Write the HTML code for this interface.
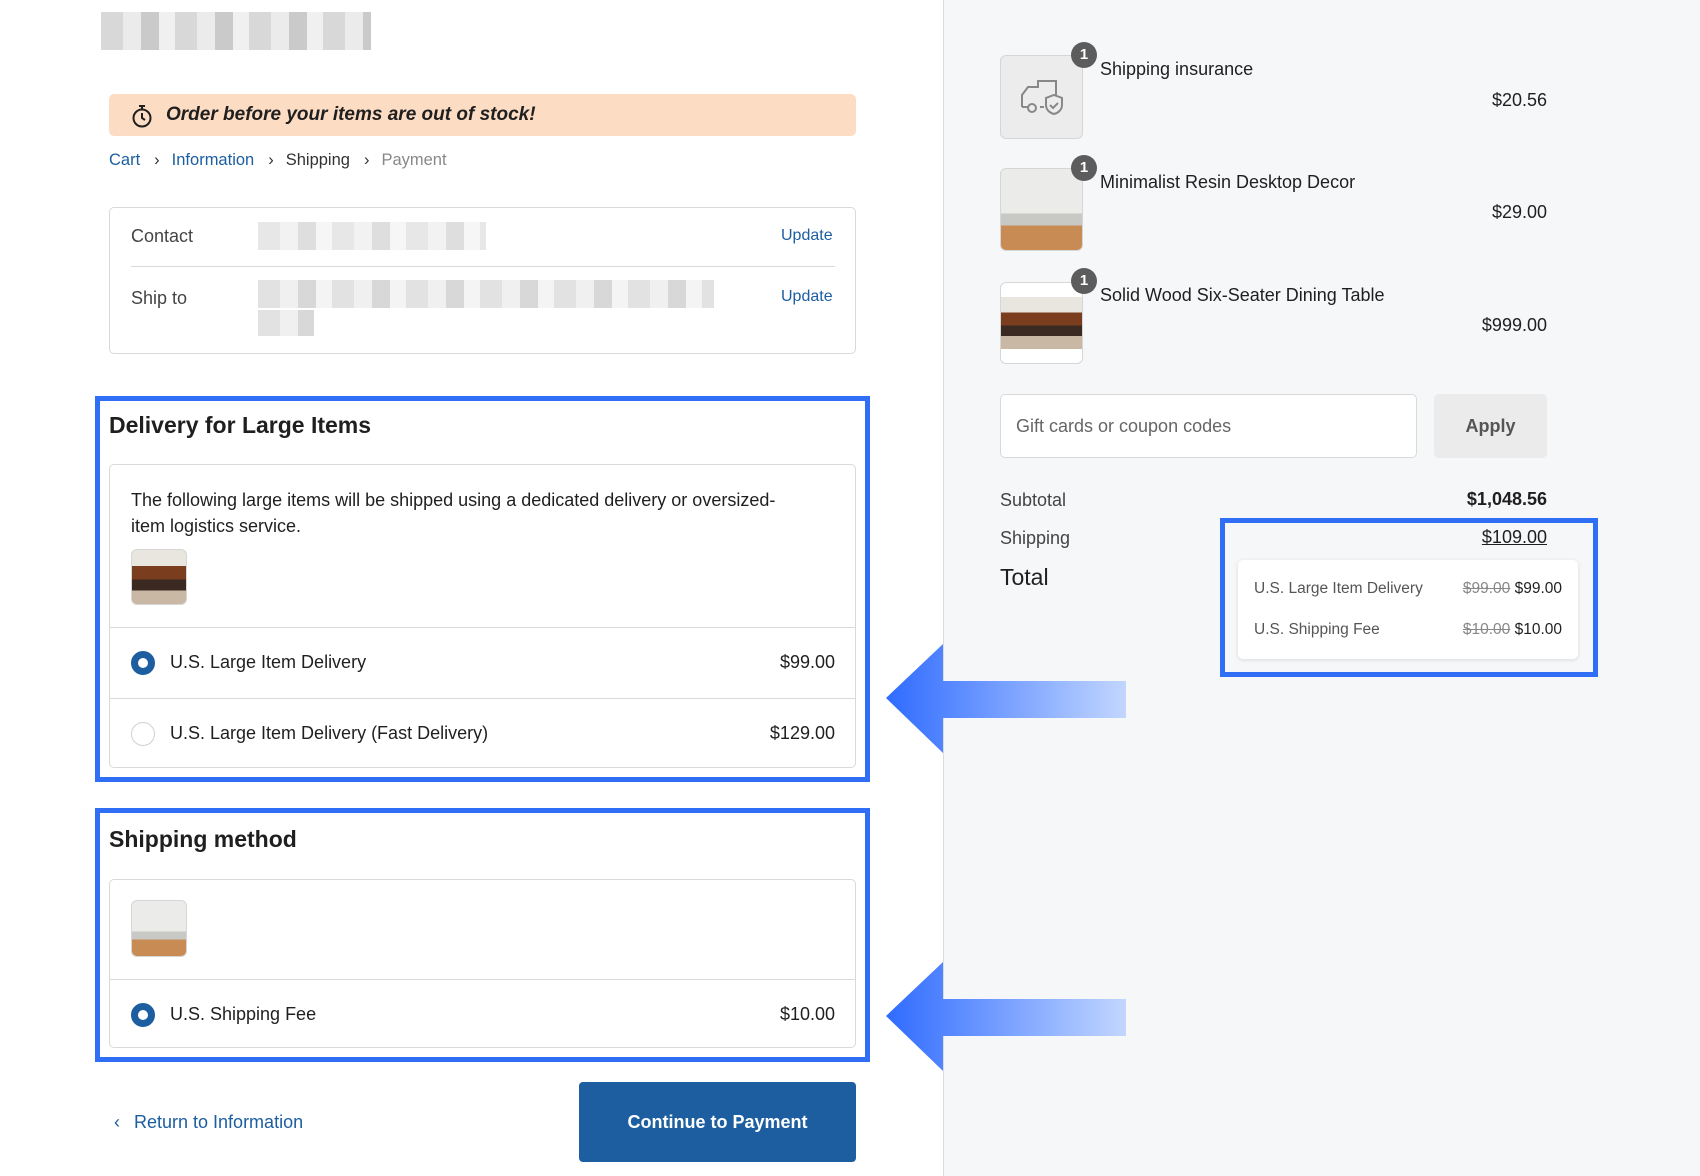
<!DOCTYPE html>
<html><head><meta charset="utf-8"><style>
*{box-sizing:border-box;margin:0;padding:0}
body{width:1700px;height:1176px;position:relative;overflow:hidden;background:#fff;font-family:"Liberation Sans",Arial,sans-serif;color:#1f1f1f}
.a{position:absolute}
.right{left:943px;top:0;width:757px;height:1176px;background:#f6f7f9;border-left:1px solid #dcdcdc}
.box{border:1px solid #d9d9d9;border-radius:5px;background:#fff}
.blue{border:5px solid #2f6ef5}
.t18{font-size:18px}
.blur{background:repeating-linear-gradient(90deg,#cfcfcf 0 22px,#e6e6e6 22px 40px,#bdbdbd 40px 58px,#ececec 58px 74px)}
.radio{width:24px;height:24px;border-radius:50%}
.on{background:#fff;border:7px solid #1c5ea0}
.off{border:1px solid #d0d0d0;background:#fff}
.thumb{border:1px solid #d6d6d6;border-radius:6px;overflow:hidden;background:#ececec}
.badge{width:26px;height:26px;border-radius:50%;background:#5c5c5c;color:#fff;font-size:15px;font-weight:bold;text-align:center;line-height:26px}
.table{background:linear-gradient(#e9e6e0 0 30%,#7a3d1e 30% 55%,#3b2a22 55% 75%,#c9b8a3 75%)}
.deer{background:linear-gradient(#ebebea 0 55%,#c8c8c4 55% 70%,#c98b54 70%)}
</style></head><body>
<div class="a blur" style="left:101px;top:12px;width:270px;height:38px;opacity:.8"></div>
<div class="a" style="left:109px;top:94px;width:747px;height:42px;background:#fddcc4;border-radius:5px"></div>
<svg class="a" style="left:131px;top:104px" width="22" height="24" viewBox="0 0 22 24"><circle cx="11" cy="14" r="8.5" fill="none" stroke="#1f1f1f" stroke-width="2"/><path d="M8 2h6M11 2v3M11 9v5l3 2" fill="none" stroke="#1f1f1f" stroke-width="2"/></svg>
<div class="a" style="left:166px;top:104px;font-size:19px;font-weight:bold;font-style:italic">Order before your items are out of stock!</div>
<div class="a" style="left:109px;top:151px;font-size:16.5px;color:#1c5ea0;white-space:nowrap">Cart<span style="color:#333;margin:0 12px 0 14px">›</span>Information<span style="color:#333;margin:0 12px 0 14px">›</span><span style="color:#333">Shipping</span><span style="color:#333;margin:0 12px 0 14px">›</span><span style="color:#888">Payment</span></div>
<div class="a box" style="left:109px;top:207px;width:747px;height:147px"></div>
<div class="a t18" style="left:131px;top:226px;color:#444">Contact</div>
<div class="a blur" style="left:258px;top:222px;width:228px;height:28px;opacity:.5"></div>
<div class="a" style="left:781px;top:227px;font-size:16px;color:#1c5ea0">Update</div>
<div class="a" style="left:131px;top:266px;width:704px;height:1px;background:#d9d9d9"></div>
<div class="a t18" style="left:131px;top:288px;color:#444">Ship to</div>
<div class="a blur" style="left:258px;top:280px;width:456px;height:28px;opacity:.6"></div>
<div class="a blur" style="left:258px;top:310px;width:56px;height:26px;opacity:.6"></div>
<div class="a" style="left:781px;top:288px;font-size:16px;color:#1c5ea0">Update</div>

<div class="a blue" style="left:95px;top:396px;width:775px;height:386px"></div>
<div class="a" style="left:109px;top:412px;font-size:23px;font-weight:bold">Delivery for Large Items</div>
<div class="a box" style="left:109px;top:464px;width:747px;height:304px"></div>
<div class="a" style="left:131px;top:487px;font-size:18px;line-height:26px;width:710px">The following large items will be shipped using a dedicated delivery or oversized-<br>item logistics service.</div>
<div class="a thumb table" style="left:131px;top:549px;width:56px;height:56px"></div>
<div class="a" style="left:110px;top:627px;width:745px;height:1px;background:#d9d9d9"></div>
<div class="a radio on" style="left:131px;top:651px"></div>
<div class="a t18" style="left:170px;top:652px">U.S. Large Item Delivery</div>
<div class="a t18" style="left:700px;top:652px;width:135px;text-align:right">$99.00</div>
<div class="a" style="left:110px;top:698px;width:745px;height:1px;background:#d9d9d9"></div>
<div class="a radio off" style="left:131px;top:722px"></div>
<div class="a t18" style="left:170px;top:723px">U.S. Large Item Delivery (Fast Delivery)</div>
<div class="a t18" style="left:700px;top:723px;width:135px;text-align:right">$129.00</div>

<div class="a blue" style="left:95px;top:808px;width:775px;height:254px"></div>
<div class="a" style="left:109px;top:826px;font-size:23px;font-weight:bold">Shipping method</div>
<div class="a box" style="left:109px;top:879px;width:747px;height:169px"></div>
<div class="a thumb deer" style="left:131px;top:900px;width:56px;height:57px"></div>
<div class="a" style="left:110px;top:979px;width:745px;height:1px;background:#d9d9d9"></div>
<div class="a radio on" style="left:131px;top:1003px"></div>
<div class="a t18" style="left:170px;top:1004px">U.S. Shipping Fee</div>
<div class="a t18" style="left:700px;top:1004px;width:135px;text-align:right">$10.00</div>

<div class="a" style="left:114px;top:1112px;font-size:18px;color:#1c5ea0">‹<span style="margin-left:14px">Return to Information</span></div>
<div class="a" style="left:579px;top:1082px;width:277px;height:80px;background:#1c5ea0;border-radius:4px;color:#fff;font-size:18px;font-weight:bold;text-align:center;line-height:80px">Continue to Payment</div>

<div class="a right"></div>
<svg class="a" style="left:886px;top:644px" width="240" height="110"><defs><linearGradient id="g" x1="0" x2="1"><stop offset="0" stop-color="#2f6bff"/><stop offset="1" stop-color="#c2d6ff"/></linearGradient></defs><path d="M0 54L57 0V37H240V74H57V109Z" fill="url(#g)"/></svg>
<svg class="a" style="left:886px;top:962px" width="240" height="110"><path d="M0 54L57 0V37H240V74H57V109Z" fill="url(#g)"/></svg>

<div class="a thumb" style="left:1000px;top:55px;width:83px;height:84px;display:flex;align-items:center;justify-content:center"><svg width="48" height="40" viewBox="0 0 48 40" fill="none" stroke="#888" stroke-width="2"><path d="M4 30V18l6-8h10V4h18v14M4 30h6M22 30h4"/><circle cx="14" cy="31" r="4"/><path d="M36 18l8 3v7c0 5-4 8-8 9-4-1-8-4-8-9v-7z"/><path d="M32 28l3 3 5-5"/></svg></div>
<div class="a badge" style="left:1071px;top:42px">1</div>
<div class="a t18" style="left:1100px;top:59px">Shipping insurance</div>
<div class="a t18" style="left:1400px;top:90px;width:147px;text-align:right">$20.56</div>
<div class="a thumb deer" style="left:1000px;top:168px;width:83px;height:83px"></div>
<div class="a badge" style="left:1071px;top:155px">1</div>
<div class="a t18" style="left:1100px;top:172px">Minimalist Resin Desktop Decor</div>
<div class="a t18" style="left:1400px;top:202px;width:147px;text-align:right">$29.00</div>
<div class="a thumb" style="left:1000px;top:282px;width:83px;height:82px;background:#fff"><div class="table" style="margin-top:14px;height:52px"></div></div>
<div class="a badge" style="left:1071px;top:268px">1</div>
<div class="a t18" style="left:1100px;top:285px">Solid Wood Six-Seater Dining Table</div>
<div class="a t18" style="left:1400px;top:315px;width:147px;text-align:right">$999.00</div>

<div class="a box" style="left:1000px;top:394px;width:417px;height:64px"></div>
<div class="a t18" style="left:1016px;top:416px;color:#666">Gift cards or coupon codes</div>
<div class="a" style="left:1434px;top:394px;width:113px;height:64px;background:#ebebeb;border-radius:5px;font-size:18px;font-weight:bold;color:#555;text-align:center;line-height:64px">Apply</div>

<div class="a t18" style="left:1000px;top:490px;color:#444">Subtotal</div>
<div class="a t18" style="left:1400px;top:489px;width:147px;text-align:right;font-weight:bold">$1,048.56</div>
<div class="a t18" style="left:1000px;top:528px;color:#444">Shipping</div>
<div class="a t18" style="left:1400px;top:527px;width:147px;text-align:right;text-decoration:underline">$109.00</div>
<div class="a" style="left:1000px;top:564px;font-size:23px">Total</div>

<div class="a" style="left:1220px;top:518px;width:378px;height:159px;border:5px solid #2f6ef5"></div>
<div class="a" style="left:1238px;top:560px;width:340px;height:99px;background:#fff;border-radius:5px;box-shadow:0 1px 4px rgba(0,0,0,.12)"></div>
<div class="a" style="left:1254px;top:580px;font-size:15.5px;color:#555">U.S. Large Item Delivery</div>
<div class="a" style="left:1400px;top:580px;width:162px;text-align:right;font-size:15.5px"><s style="color:#888">$99.00</s> $99.00</div>
<div class="a" style="left:1254px;top:621px;font-size:15.5px;color:#555">U.S. Shipping Fee</div>
<div class="a" style="left:1400px;top:621px;width:162px;text-align:right;font-size:15.5px"><s style="color:#888">$10.00</s> $10.00</div>
</body></html>
